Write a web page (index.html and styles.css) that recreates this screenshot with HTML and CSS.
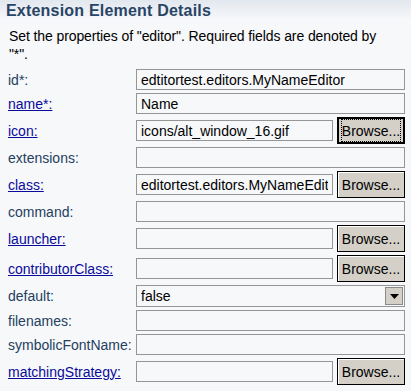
FILE: index.html
```html
<!DOCTYPE html>
<html lang="en">
<head>
  <meta charset="UTF-8" />
  <title>Extension Element Details</title>
  <link rel="stylesheet" href="styles.css">
</head>
<body>
  <div class="section">
    <div class="section-title">Extension Element Details</div>
    <p class="desc">Set the properties of "editor". Required fields are denoted by "*".</p>

    <div class="form">
      <span class="lbl">id*:</span>
      <div class="ctl"><input type="text" value="edtitortest.editors.MyNameEditor" readonly></div>

      <a class="lbl link" href="#">name*:</a>
      <div class="ctl"><input type="text" value="Name" readonly></div>

      <a class="lbl link" href="#">icon:</a>
      <div class="ctl tall">
        <input type="text" value="icons/alt_window_16.gif" readonly>
        <button class="browse focused"><span>Browse...</span></button>
      </div>

      <span class="lbl">extensions:</span>
      <div class="ctl"><input type="text" value="" readonly></div>

      <a class="lbl link" href="#">class:</a>
      <div class="ctl tall">
        <input type="text" value="editortest.editors.MyNameEditor" readonly>
        <button class="browse"><span>Browse...</span></button>
      </div>

      <span class="lbl">command:</span>
      <div class="ctl"><input type="text" value="" readonly></div>

      <a class="lbl link" href="#">launcher:</a>
      <div class="ctl tall">
        <input type="text" value="" readonly>
        <button class="browse"><span>Browse...</span></button>
      </div>

      <a class="lbl link" href="#">contributorClass:</a>
      <div class="ctl tall">
        <input type="text" value="" readonly>
        <button class="browse"><span>Browse...</span></button>
      </div>

      <span class="lbl">default:</span>
      <div class="ctl combo-row">
        <div class="combo">
          <span class="combo-text">false</span>
          <span class="combo-arrow">
            <svg width="9" height="5" viewBox="0 0 9 5"><path d="M0 0h9L4.5 5z" fill="#000"/></svg>
          </span>
        </div>
      </div>

      <span class="lbl">filenames:</span>
      <div class="ctl"><input type="text" value="" readonly></div>

      <span class="lbl">symbolicFontName:</span>
      <div class="ctl"><input type="text" value="" readonly></div>

      <a class="lbl link" href="#">matchingStrategy:</a>
      <div class="ctl tall">
        <input type="text" value="" readonly>
        <button class="browse"><span>Browse...</span></button>
      </div>
    </div>
  </div>
</body>
</html>
```

FILE: styles.css
```css
body {
  margin: 0;
  background: #f7f8fa;
  font-family: "Liberation Sans", Arial, sans-serif;
  font-size: 14px;
  color: #000;
}
.section {
  width: 411px;
}
.section-title {
  height: 19px;
  padding: 1px 0 0 6px;
  font-weight: bold;
  font-size: 16px;
  letter-spacing: 0.2px;
  line-height: 19px;
  color: #284466;
  background: linear-gradient(to bottom, #e2e8ef, #f7f8fa);
}
.desc {
  margin: 7px 0 0 9px;
  width: 380px;
  line-height: 18px;
  letter-spacing: -0.1px;
}
.form {
  display: grid;
  grid-template-columns: 128px 269px;
  row-gap: 3px;
  margin-top: 6px;
  padding-left: 8px;
}
.lbl {
  align-self: center;
  color: #24405e;
  white-space: nowrap;
}
.link {
  color: #0a0a9a;
  text-decoration: underline;
}
.ctl {
  display: flex;
  align-items: center;
  gap: 4px;
  height: 21px;
}
.ctl.tall {
  height: 27px;
}
.ctl.combo-row {
  height: 22px;
}
input {
  flex: 1;
  min-width: 0;
  height: 21px;
  box-sizing: border-box;
  margin: 0;
  padding: 0 4px;
  border: 1px solid #959595;
  background: #f7f8fa;
  font-family: inherit;
  font-size: 14px;
  color: #000;
  outline: none;
}
.browse {
  width: 68px;
  height: 27px;
  box-sizing: border-box;
  margin: 0;
  padding: 0;
  border: 1px solid #000;
  background: #d4d0c8;
  box-shadow: inset 1px 1px 0 #fff;
  font-family: inherit;
  font-size: 14px;
  color: #000;
}
.browse.focused {
  border-width: 2px;
  box-shadow: none;
}
.browse.focused span {
  display: flex;
  align-items: center;
  justify-content: center;
  height: 21px;
  margin: 0 2px;
  border: 1px dotted #000;
}
.combo {
  flex: 1;
  display: flex;
  align-items: center;
  height: 22px;
  box-sizing: border-box;
  border: 1px solid #959595;
  background: #f7f8fa;
  padding-left: 4px;
}
.combo-text {
  flex: 1;
}
.combo-arrow {
  width: 18px;
  height: 18px;
  margin-right: 1px;
  box-sizing: border-box;
  display: flex;
  align-items: center;
  justify-content: center;
  background: #d4d0c8;
  border: 1px solid #8a8a8a;
}
```
